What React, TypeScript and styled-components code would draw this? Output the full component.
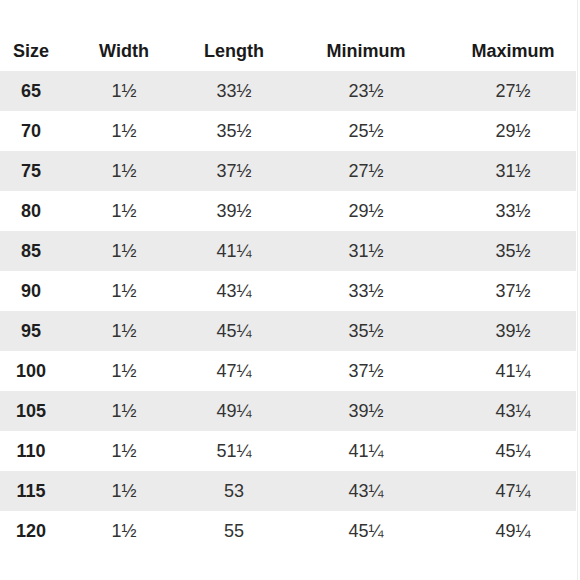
import React from "react";
import styled, { createGlobalStyle } from "styled-components";

const Global = createGlobalStyle`
  html, body { margin: 0; padding: 0; background: #ffffff; }
  body { font-family: "Liberation Sans", Arial, sans-serif; }
`;

const Frame = styled.div`
  width: 577px;
  height: 577px;
  border-right: 1px solid #ececec;
  border-bottom: 1px solid #ececec;
  padding-top: 31px;
  box-sizing: content-box;
`;

const Table = styled.div`
  width: 576px;
  display: flex;
  flex-direction: column;
`;

const Row = styled.div<{ $shaded?: boolean }>`
  display: grid;
  grid-template-columns: 62px 124px 96px 168px 126px;
  height: 40px;
  align-items: center;
  background: ${(p) => (p.$shaded ? "#ebebeb" : "transparent")};
`;

const HeadCell = styled.div`
  text-align: center;
  font-size: 18px;
  font-weight: 700;
  color: #1a1a1a;
`;

const Cell = styled.div<{ $bold?: boolean }>`
  text-align: center;
  font-size: 18px;
  font-weight: ${(p) => (p.$bold ? 700 : 400)};
  color: ${(p) => (p.$bold ? "#1e1e1e" : "#333333")};
`;

const headers = ["Size", "Width", "Length", "Minimum", "Maximum"];

const rows: string[][] = [
  ["65", "1½", "33½", "23½", "27½"],
  ["70", "1½", "35½", "25½", "29½"],
  ["75", "1½", "37½", "27½", "31½"],
  ["80", "1½", "39½", "29½", "33½"],
  ["85", "1½", "41¼", "31½", "35½"],
  ["90", "1½", "43¼", "33½", "37½"],
  ["95", "1½", "45¼", "35½", "39½"],
  ["100", "1½", "47¼", "37½", "41¼"],
  ["105", "1½", "49¼", "39½", "43¼"],
  ["110", "1½", "51¼", "41¼", "45¼"],
  ["115", "1½", "53", "43¼", "47¼"],
  ["120", "1½", "55", "45¼", "49¼"],
];

export default function App() {
  return (
    <>
      <Global />
      <Frame>
        <Table>
          <Row>
            {headers.map((h) => (
              <HeadCell key={h}>{h}</HeadCell>
            ))}
          </Row>
          {rows.map((r, i) => (
            <Row key={r[0]} $shaded={i % 2 === 0}>
              {r.map((v, j) => (
                <Cell key={j} $bold={j === 0}>
                  {v}
                </Cell>
              ))}
            </Row>
          ))}
        </Table>
      </Frame>
    </>
  );
}
